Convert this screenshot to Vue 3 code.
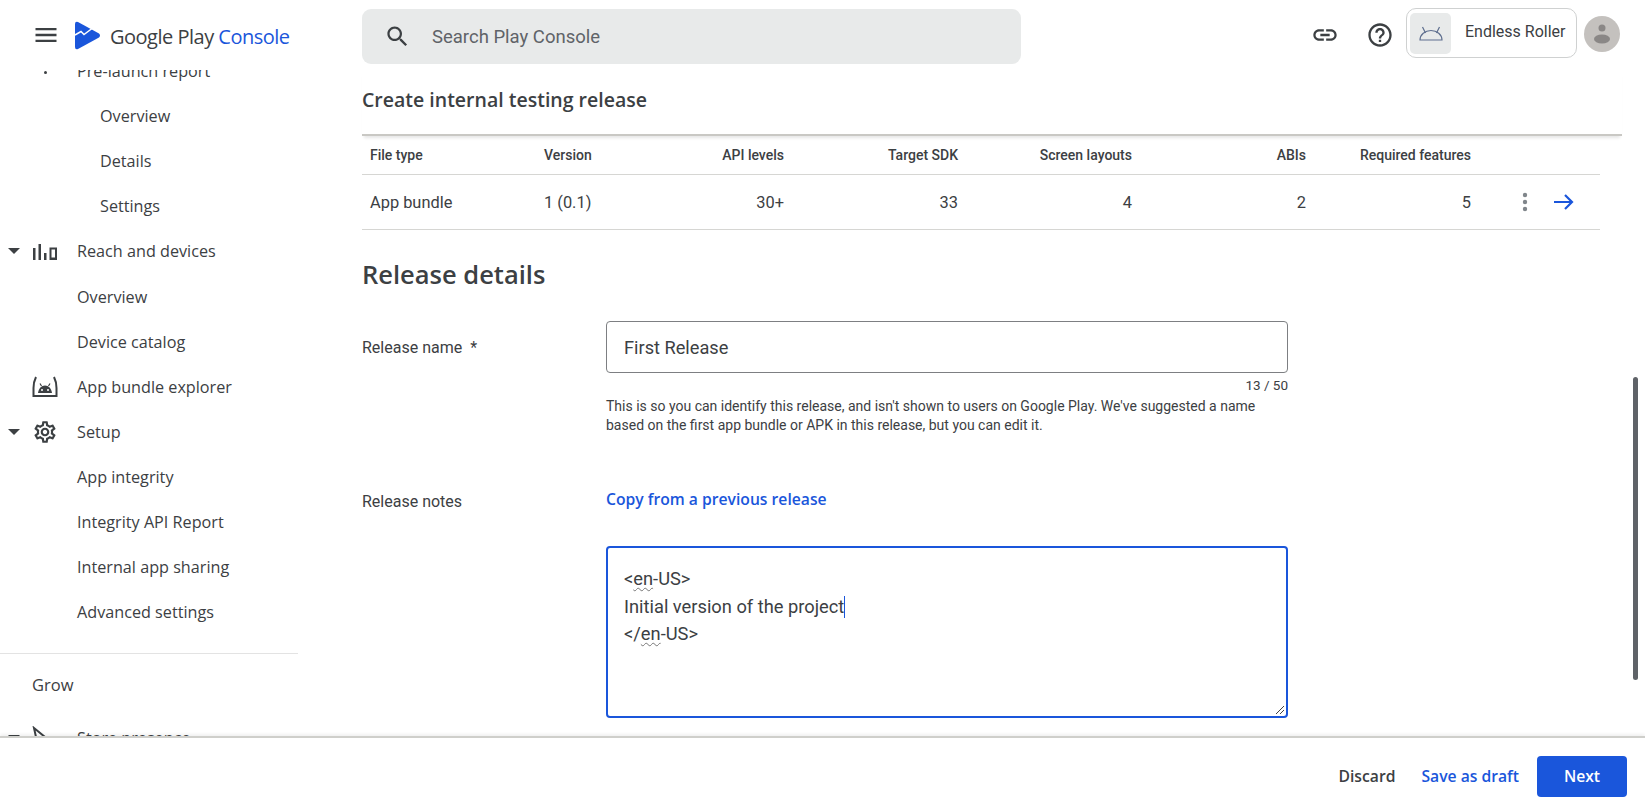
<script setup>
const navRows = [
  { label: "Overview", depth: 2 },
  { label: "Details", depth: 2 },
  { label: "Settings", depth: 2 },
  { label: "Reach and devices", depth: 0, caret: true, icon: "reach" },
  { label: "Overview", depth: 1 },
  { label: "Device catalog", depth: 1 },
  { label: "App bundle explorer", depth: 0, icon: "bundle" },
  { label: "Setup", depth: 0, caret: true, icon: "gear" },
  { label: "App integrity", depth: 1 },
  { label: "Integrity API Report", depth: 1 },
  { label: "Internal app sharing", depth: 1 },
  { label: "Advanced settings", depth: 1 },
];

const columns = [
  { head: "File type", value: "App bundle" },
  { head: "Version", value: "1 (0.1)" },
  { head: "API levels", value: "30+", right: true },
  { head: "Target SDK", value: "33", right: true },
  { head: "Screen layouts", value: "4", right: true },
  { head: "ABIs", value: "2", right: true },
  { head: "Required features", value: "5", right: true },
];
</script>

<template>
  <div class="app">
    <header class="topbar">
      <div class="brand">
        <svg class="menu-icon" viewBox="0 0 24 24" width="28" height="28">
          <path d="M3 18h18v-2H3v2zm0-5h18v-2H3v2zm0-7v2h18V6H3z" fill="#3c4043" />
        </svg>
        <svg class="logo" viewBox="0 0 27 29" width="27" height="29">
          <path d="M1 3Q1 0 4 1L25 12.5Q27 14.500 25 16.500L4 28Q1 29 1 26Z" fill="#1a56db" />
          <path d="M1 14L7 10.500L10 13.500L18 7.500" fill="none" stroke="#fff" stroke-width="1.500" />
        </svg>
        <span class="brand-name">Google Play <em>Console</em></span>
      </div>
      <div class="search">
        <svg viewBox="0 0 24 24" width="27" height="27">
          <path
            d="M15.500 14h-.79l-.28-.27C15.410 12.590 16 11.110 16 9.500 16 5.910 13.090 3 9.500 3S3 5.910 3 9.500 5.910 16 9.500 16c1.610 0 3.090-.59 4.230-1.570l.27.28v.79l5 4.990L20.490 19l-4.990-5zm-6 0C7.010 14 5 11.990 5 9.500S7.010 5 9.500 5 14 7.010 14 9.500 11.990 14 9.500 14z"
            fill="#3c4043"
          />
        </svg>
        <span>Search Play Console</span>
      </div>
      <div class="top-actions">
        <svg viewBox="0 0 24 24" width="28" height="28">
          <path
            d="M3.900 12c0-1.710 1.390-3.100 3.100-3.100h4V7H7c-2.760 0-5 2.240-5 5s2.240 5 5 5h4v-1.900H7c-1.710 0-3.100-1.390-3.100-3.100zM8 13h8v-2H8v2zm9-6h-4v1.900h4c1.710 0 3.100 1.390 3.100 3.100s-1.390 3.100-3.100 3.100h-4V17h4c2.760 0 5-2.240 5-5s-2.240-5-5-5z"
            fill="#3c4043"
          />
        </svg>
        <svg viewBox="0 0 24 24" width="28" height="28">
          <path
            d="M11 18h2v-2h-2v2zm1-16C6.480 2 2 6.480 2 12s4.480 10 10 10 10-4.480 10-10S17.520 2 12 2zm0 18c-4.410 0-8-3.590-8-8s3.590-8 8-8 8 3.590 8 8-3.590 8-8 8zm0-14c-2.210 0-4 1.790-4 4h2c0-1.100.9-2 2-2s2 .9 2 2c0 2-3 1.750-3 5h2c0-2.250 3-2.500 3-5 0-2.210-1.790-4-4-4z"
            fill="#3c4043"
          />
        </svg>
        <div class="app-card">
          <div class="app-thumb">
            <svg viewBox="0 0 24 15" width="24" height="15" fill="none" stroke="#5f6f8f" stroke-width="1.200">
              <path d="M1 14h22C23 8.500 18 4.500 12 4.500S1 8.500 1 14Z" />
              <path d="M6.500 7L3.500 1M17.500 7L20.500 1" />
            </svg>
          </div>
          <span>Endless Roller</span>
        </div>
        <div class="avatar">
          <svg viewBox="0 0 36 36" width="36" height="36">
            <circle cx="18" cy="12" r="3.500" fill="#8a8786" />
            <ellipse cx="18" cy="23" rx="8" ry="4.500" fill="#8a8786" />
          </svg>
        </div>
      </div>
    </header>

    <div class="body">
      <nav class="sidebar">
        <div class="nav-inner">
          <div class="nav-row first-row">
            <span class="clipped-dot"></span>
            <span class="nav-label">Pre-launch report</span>
          </div>
          <div v-for="(row, i) in navRows" :key="i" class="nav-row" :class="'depth-' + row.depth">
            <template v-if="row.depth === 0">
              <span class="caret-slot"><i v-if="row.caret" class="caret"></i></span>
              <span class="icon-slot">
                <svg v-if="row.icon === 'reach'" viewBox="0 0 26 24" width="26" height="24" fill="#3c4043">
                  <rect x="1" y="9" width="2.500" height="12" />
                  <rect x="6.500" y="5" width="2.500" height="16" />
                  <rect x="12" y="14" width="2.500" height="7" />
                  <path d="M17.500 8.500h7.500v12.500h-7.500zM19.500 10.500v8h3.500v-8z" fill-rule="evenodd" />
                </svg>
                <svg v-else-if="row.icon === 'bundle'" viewBox="0 0 26 24" width="26" height="24">
                  <path d="M4 2Q1.500 7 1.500 13v8h23v-8Q24.500 7 22 2" fill="none" stroke="#3c4043" stroke-width="2" />
                  <path d="M6 18c.5-4.500 3.500-7.500 7-7.500s6.500 3 7 7.500z" fill="#3c4043" />
                  <path d="M9.500 11L8 8.500M16.500 11L18 8.500" stroke="#3c4043" stroke-width="1.200" />
                  <circle cx="10" cy="15" r="1" fill="#fff" />
                  <circle cx="16" cy="15" r="1" fill="#fff" />
                </svg>
                <svg v-else viewBox="0 0 24 24" width="26" height="26">
                  <path
                    d="M19.430 12.980c.04-.32.07-.64.07-.98 0-.34-.03-.66-.07-.98l2.110-1.650c.19-.15.24-.42.12-.64l-2-3.460c-.09-.16-.26-.25-.44-.25-.06 0-.12.01-.17.03l-2.490 1c-.52-.4-1.080-.73-1.690-.98l-.38-2.650C14.460 2.180 14.250 2 14 2h-4c-.25 0-.46.18-.49.42l-.38 2.650c-.61.25-1.170.59-1.690.98l-2.490-1c-.06-.02-.12-.03-.18-.03-.17 0-.34.09-.43.25l-2 3.460c-.13.22-.07.49.12.64l2.110 1.650c-.04.32-.07.65-.07.98 0 .33.03.66.07.98l-2.110 1.650c-.19.15-.24.42-.12.64l2 3.460c.09.16.26.25.44.25.06 0 .12-.01.17-.03l2.490-1c.52.4 1.080.73 1.690.98l.38 2.650c.03.24.24.42.49.42h4c.25 0 .46-.18.49-.42l.38-2.650c.61-.25 1.170-.59 1.690-.98l2.490 1c.06.02.12.03.18.03.17 0 .34-.09.43-.25l2-3.460c.12-.22.07-.49-.12-.64l-2.110-1.650zm-1.980-1.710c.04.31.05.52.05.73 0 .21-.02.43-.05.73l-.14 1.130.89.7 1.080.84-.7 1.210-1.270-.51-1.040-.42-.9.68c-.43.32-.84.56-1.250.73l-1.060.43-.16 1.130-.2 1.350h-1.400l-.19-1.350-.16-1.130-1.060-.43c-.43-.18-.83-.41-1.230-.71l-.91-.7-1.060.43-1.270.51-.7-1.210 1.080-.84.89-.7-.14-1.130c-.03-.31-.05-.54-.05-.74s.02-.43.05-.73l.14-1.130-.89-.7-1.080-.84.7-1.210 1.270.51 1.040.42.9-.68c.43-.32.84-.56 1.250-.73l1.060-.43.16-1.130.2-1.350h1.390l.19 1.350.16 1.130 1.060.43c.43.18.83.41 1.230.71l.91.7 1.060-.43 1.270-.51.7 1.210-1.070.85-.89.7.14 1.130zM12 8c-2.210 0-4 1.790-4 4s1.790 4 4 4 4-1.790 4-4-1.790-4-4-4zm0 6c-1.100 0-2-.9-2-2s.9-2 2-2 2 .9 2 2-.9 2-2 2z"
                    fill="#3c4043"
                  />
                </svg>
              </span>
            </template>
            <span class="nav-label">{{ row.label }}</span>
          </div>
          <div class="nav-divider"></div>
          <div class="nav-section">Grow</div>
          <div class="nav-row store-row">
            <span class="caret-slot"><i class="caret"></i></span>
            <span class="icon-slot">
              <svg viewBox="0 0 26 24" width="26" height="24" fill="none" stroke="#3c4043" stroke-width="2">
                <path d="M2 2L24 20H6zM2 2l4 18" />
              </svg>
            </span>
            <span class="nav-label">Store presence</span>
          </div>
        </div>
      </nav>

      <main class="main">
        <h1 class="page-title">Create internal testing release</h1>
        <div class="content">
          <div class="bundle-table">
            <div class="table-row table-head">
              <div v-for="col in columns" :key="col.head" :class="{ right: col.right }">{{ col.head }}</div>
            </div>
            <div class="table-row table-body">
              <div v-for="col in columns" :key="col.head" :class="{ right: col.right }">{{ col.value }}</div>
              <div class="row-actions">
                <svg viewBox="0 0 6 20" width="6" height="20" fill="#80868b">
                  <circle cx="3" cy="3" r="2.200" />
                  <circle cx="3" cy="10" r="2.200" />
                  <circle cx="3" cy="17" r="2.200" />
                </svg>
                <svg viewBox="0 0 20 16" width="20" height="16" fill="none" stroke="#1a56db" stroke-width="2.200">
                  <path d="M0 8h18M11 1l7 7-7 7" />
                </svg>
              </div>
            </div>
          </div>

          <h2 class="section-title">Release details</h2>

          <div class="form-row name-row">
            <label class="form-label">Release name &nbsp;*</label>
            <div class="form-field">
              <div class="text-input">First Release</div>
              <div class="counter">13 / 50</div>
              <p class="hint">
                This is so you can identify this release, and isn't shown to users on Google Play. We've suggested a
                name based on the first app bundle or APK in this release, but you can edit it.
              </p>
            </div>
          </div>

          <div class="form-row notes-row">
            <label class="form-label">Release notes</label>
            <div class="form-field">
              <a class="copy-link">Copy from a previous release</a>
              <div class="notes-box">
                <div>&lt;<span class="typo">en</span>-US&gt;</div>
                <div>Initial version of the project<i class="text-caret"></i></div>
                <div>&lt;/<span class="typo">en</span>-US&gt;</div>
                <svg class="resize-grip" viewBox="0 0 10 10" width="10" height="10" stroke="#444" stroke-width="1">
                  <path d="M1 9L9 1M5 9L9 5" />
                </svg>
              </div>
            </div>
          </div>
        </div>
        <div class="scroll-thumb"></div>
      </main>
    </div>

    <footer class="footer">
      <button class="text-btn">Discard</button>
      <button class="text-btn blue">Save as draft</button>
      <button class="next-btn">Next</button>
    </footer>
  </div>
</template>

<style>
html,
body {
  margin: 0;
  background: #fff;
}
</style>

<style scoped>
.app {
  height: 100vh;
  display: flex;
  flex-direction: column;
  overflow: hidden;
  color: #3c4043;
  font-family: Roboto, "Liberation Sans", sans-serif;
}

.topbar {
  height: 70px;
  flex: none;
  display: flex;
  align-items: center;
  position: relative;
  z-index: 2;
  background: #fff;
}

.brand {
  width: 362px;
  flex: none;
  display: flex;
  align-items: center;
  padding-left: 32px;
  box-sizing: border-box;
}

.logo {
  margin-left: 14px;
}

.brand-name {
  margin: 3px 0 0 9px;
  font-family: "Open Sans", sans-serif;
  font-size: 20px;
  letter-spacing: -0.5px;
  white-space: nowrap;
}

.brand-name em {
  font-style: normal;
  color: #1a56db;
}

.search {
  width: 659px;
  height: 55px;
  flex: none;
  display: flex;
  align-items: center;
  gap: 21px;
  margin-top: 3px;
  padding-left: 22px;
  box-sizing: border-box;
  border-radius: 9px;
  background: #e8eaea;
  font-size: 18.500px;
  color: #5f6368;
}

.top-actions {
  margin-left: auto;
  display: flex;
  align-items: center;
  padding-right: 25px;
}

.top-actions > svg:first-child {
  margin-right: 27px;
}

.top-actions > svg:nth-child(2) {
  margin-right: 12px;
}

.app-card {
  width: 171px;
  height: 50px;
  display: flex;
  align-items: center;
  gap: 14px;
  margin-top: -4px;
  padding-left: 3px;
  box-sizing: border-box;
  border: 1px solid #cfd1d1;
  border-radius: 10px;
  font-size: 16px;
  white-space: nowrap;
}

.app-card span {
  padding-bottom: 3px;
}

.app-thumb {
  width: 41px;
  height: 41px;
  display: flex;
  align-items: center;
  justify-content: center;
  border-radius: 5px;
  background: #e8eaea;
}

.avatar {
  width: 36px;
  height: 36px;
  margin: -2px 0 0 7px;
  border-radius: 50%;
  background: #c4c1be;
}

.body {
  flex: 1;
  min-height: 0;
  display: flex;
}

.sidebar {
  width: 298px;
  flex: none;
  overflow: hidden;
}

.nav-inner {
  margin-top: -21.5px;
  font-family: "Open Sans", sans-serif;
  font-size: 16.200px;
}

.nav-row {
  height: 45.100px;
  display: flex;
  align-items: center;
  white-space: nowrap;
}

.first-row {
  padding-left: 77px;
  position: relative;
}

.clipped-dot {
  position: absolute;
  left: 44px;
  top: 22px;
  width: 3px;
  height: 3px;
  border-radius: 50%;
  background: #3c4043;
}

.depth-1 {
  padding-left: 77px;
}

.depth-2 {
  padding-left: 100px;
}

.caret-slot {
  width: 32px;
  flex: none;
  padding-left: 8px;
  box-sizing: border-box;
}

.caret {
  display: block;
  width: 0;
  height: 0;
  border-left: 6px solid transparent;
  border-right: 6px solid transparent;
  border-top: 6px solid #3c4043;
}

.icon-slot {
  width: 45px;
  flex: none;
  display: flex;
  align-items: center;
}

.nav-divider {
  height: 1px;
  margin-top: 18px;
  background: #e3e3e3;
}

.nav-section {
  height: 45px;
  display: flex;
  align-items: center;
  margin-top: 8.500px;
  padding-left: 32px;
  font-size: 16.500px;
}

.store-row {
  margin-top: 8px;
}

.main {
  flex: 1;
  min-width: 0;
  position: relative;
  padding: 0 23px 0 64px;
}

.page-title {
  height: 66px;
  margin: 0;
  display: flex;
  align-items: center;
  padding-bottom: 6px;
  box-sizing: border-box;
  border-bottom: 2px solid #c9c8c4;
  font-family: "Open Sans", sans-serif;
  font-size: 19.500px;
  font-weight: 600;
  box-shadow: 0 4px 3px -2px rgba(0, 0, 0, 0.1);
}

.content {
  padding-right: 22px;
}

.table-row {
  display: grid;
  grid-template-columns: 174px 128px 128px 174px 174px 174px 165px 1fr;
  align-items: center;
  border-bottom: 1px solid #d6d6d3;
}

.table-row > div {
  padding: 0 8px;
}

.table-head {
  height: 37px;
  padding-bottom: 1px;
  font-size: 14px;
  font-weight: 500;
}

.table-body {
  height: 54px;
  font-size: 16.400px;
}

.right {
  text-align: right;
}

.table-row > .row-actions {
  display: flex;
  align-items: center;
  gap: 26px;
  padding-left: 43px;
}

.section-title {
  margin: 26px 0 0;
  font-family: "Open Sans", sans-serif;
  font-size: 25.500px;
  font-weight: 600;
  line-height: 36px;
}

.form-row {
  display: flex;
}

.name-row {
  margin-top: 29px;
}

.form-label {
  width: 244px;
  flex: none;
  padding-top: 17px;
  font-size: 16px;
}

.form-field {
  width: 682px;
}

.text-input {
  height: 52px;
  display: flex;
  align-items: center;
  padding-left: 17px;
  box-sizing: border-box;
  border: 1px solid #7d7f82;
  border-radius: 4px;
  font-size: 18.200px;
}

.counter {
  margin-top: 4px;
  text-align: right;
  font-size: 13.500px;
  line-height: 16px;
}

.hint {
  margin: 4px 0 0;
  font-size: 14px;
  line-height: 19px;
}

.notes-row {
  margin-top: 52px;
}

.notes-row .form-label {
  padding-top: 5px;
}

.copy-link {
  display: block;
  font-family: "Open Sans", sans-serif;
  font-size: 15.700px;
  font-weight: 600;
  color: #1a56db;
  line-height: 24px;
}

.notes-box {
  height: 172px;
  margin-top: 35px;
  position: relative;
  padding: 17px 16px;
  box-sizing: border-box;
  border: 2px solid #1a56db;
  border-radius: 4px;
  font-size: 18.300px;
  line-height: 27.500px;
}

.typo {
  text-decoration: underline wavy #777 1px;
  text-underline-offset: 2px;
}

.text-caret {
  display: inline-block;
  width: 1px;
  height: 22px;
  vertical-align: -5px;
  background: #1a56db;
}

.resize-grip {
  position: absolute;
  right: 1px;
  bottom: 1px;
}

.scroll-thumb {
  position: absolute;
  right: 7px;
  top: 307px;
  width: 5px;
  height: 303px;
  border-radius: 3px;
  background: #5f6368;
}

.footer {
  height: 74px;
  flex: none;
  display: flex;
  align-items: center;
  justify-content: flex-end;
  padding: 4px 18px 0 0;
  box-sizing: border-box;
  position: relative;
  background: #fff;
  border-top: 2px solid #cfcfcb;
  box-shadow: 0 -2px 3px rgba(0, 0, 0, 0.06);
}

.text-btn,
.next-btn {
  border: none;
  background: none;
  font-family: "Open Sans", sans-serif;
  font-size: 15.700px;
  font-weight: 600;
  color: #3c4043;
  padding: 0;
}

.text-btn.blue {
  margin-left: 26px;
  color: #1a56db;
}

.next-btn {
  width: 90px;
  height: 41px;
  margin-left: 18px;
  border-radius: 4px;
  background: #1a56db;
  color: #fff;
}
</style>
